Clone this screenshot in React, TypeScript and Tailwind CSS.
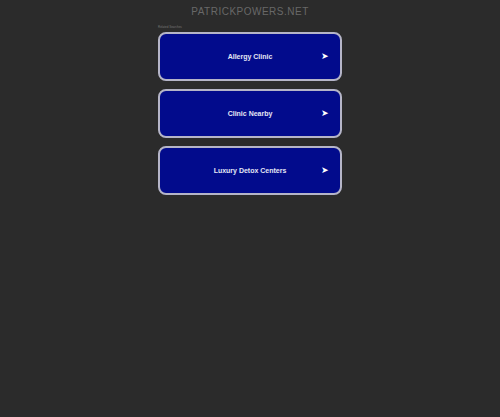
export default function App() {
  const links = ['Allergy Clinic', 'Clinic Nearby', 'Luxury Detox Centers'];

  return (
    <div
      className="min-h-[417px] w-full bg-[#2b2b2b] flex flex-col items-center"
      style={{ fontFamily: '"Liberation Sans", Arial, sans-serif' }}
    >
      <div className="pt-[6px] h-[20px] text-[10px] leading-[12px] tracking-[0.5px] text-[#686868]">
        PATRICKPOWERS.NET
      </div>
      <div className="w-[184px] flex flex-col">
        <div className="h-[12px] pt-[5px] text-[3px] leading-[4px] text-[#777]">Related Searches</div>
        <div className="flex flex-col gap-[8px]">
          {links.map((label) => (
            <div
              key={label}
              className="h-[49px] rounded-[8px] border-2 border-[#b5b5c8] bg-[#020b8c] flex items-center relative cursor-pointer"
            >
              <span className="flex-1 text-center text-[7px] leading-[8px] pt-[1px] font-bold text-[#e4e6f4]">{label}</span>
              <span className="absolute right-[11px] text-[9px] text-white leading-none">➤</span>
            </div>
          ))}
        </div>
      </div>
    </div>
  );
}
